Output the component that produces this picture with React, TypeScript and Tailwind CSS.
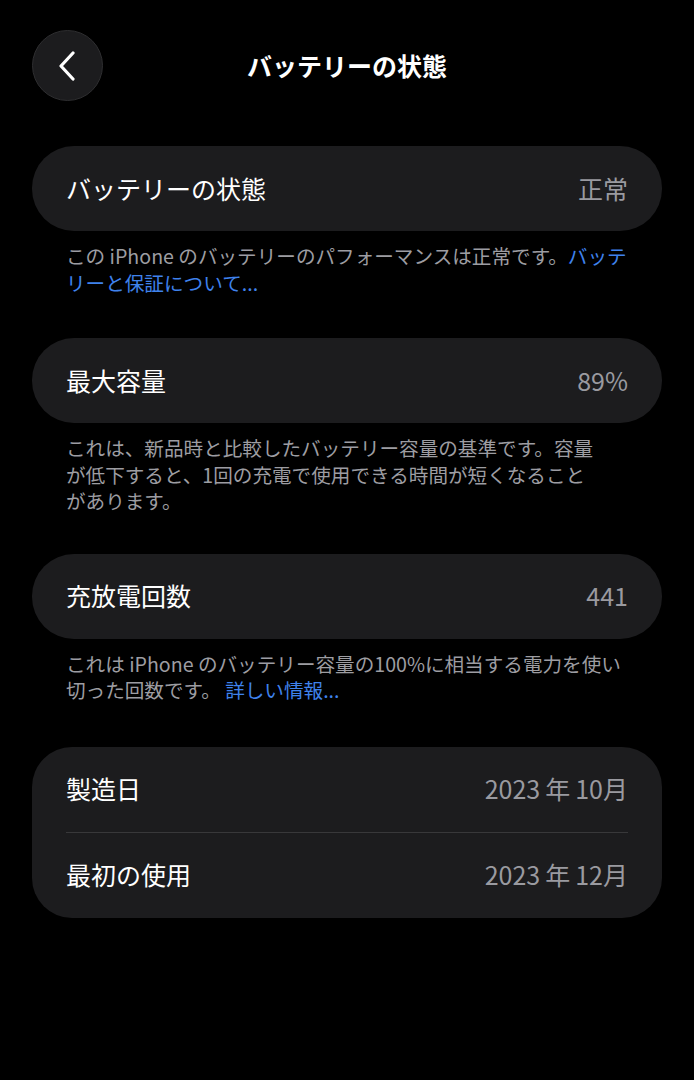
import React from "react";

const font = {
  fontFamily: '"Noto Sans CJK JP", "Noto Sans", "Liberation Sans", sans-serif',
};

function Row({ label, value }: { label: string; value: string }) {
  return (
    <div className="flex h-[85px] items-center justify-between px-[34px]">
      <span className="text-[25px] text-white">{label}</span>
      <span className="text-[25px] text-[#9a9aa0]">{value}</span>
    </div>
  );
}

function Card({ children }: { children: React.ReactNode }) {
  return <div className="rounded-[42px] bg-[#1c1c1e]">{children}</div>;
}

function Note({ children }: { children: React.ReactNode }) {
  return (
    <p className="px-[34px] text-[19.6px] leading-[26.5px] text-[#9d9da2] whitespace-nowrap">
      {children}
    </p>
  );
}

export default function App() {
  return (
    <div className="min-h-[1080px] w-[694px] bg-black" style={font}>
      {/* header */}
      <div className="relative flex h-[132px] items-center justify-center">
        <button className="absolute left-[32px] top-[30px] flex h-[71px] w-[71px] items-center justify-center rounded-full border border-[#2e2e30] bg-[#1c1c1e]">
          <svg width="20" height="30" viewBox="0 0 20 30" fill="none">
            <path
              d="M15 2 L3 15 L15 28"
              stroke="white"
              strokeWidth="3.2"
              strokeLinecap="round"
              strokeLinejoin="round"
            />
          </svg>
        </button>
        <h1 className="text-[25px] font-bold text-white">バッテリーの状態</h1>
      </div>

      <div className="px-[32px]">
        <div className="mt-[14px]">
          <Card>
            <Row label="バッテリーの状態" value="正常" />
          </Card>
        </div>
        <div className="mt-[12px]">
          <Note>
            この iPhone のバッテリーのパフォーマンスは正常です。
            <span className="text-[#3f82ec]">バッテ</span>
            <br />
            <span className="text-[#3f82ec]">リーと保証について...</span>
          </Note>
        </div>

        <div className="mt-[42px]">
          <Card>
            <Row label="最大容量" value="89%" />
          </Card>
        </div>
        <div className="mt-[12px]">
          <Note>
            これは、新品時と比較したバッテリー容量の基準です。容量
            <br />
            が低下すると、1回の充電で使用できる時間が短くなること
            <br />
            があります。
          </Note>
        </div>

        <div className="mt-[39px]">
          <Card>
            <Row label="充放電回数" value="441" />
          </Card>
        </div>
        <div className="mt-[12px]">
          <Note>
            これは iPhone のバッテリー容量の100%に相当する電力を使い
            <br />
            切った回数です。 <span className="text-[#3f82ec]">詳しい情報...</span>
          </Note>
        </div>

        <div className="mt-[43px]">
          <div className="rounded-[40px] bg-[#1c1c1e]">
            <Row label="製造日" value={"2023\u2009年\u200910月"} />
            <div className="mx-[34px] h-px bg-[#38383a]" />
            <Row label="最初の使用" value={"2023\u2009年\u200912月"} />
          </div>
        </div>
      </div>
    </div>
  );
}
